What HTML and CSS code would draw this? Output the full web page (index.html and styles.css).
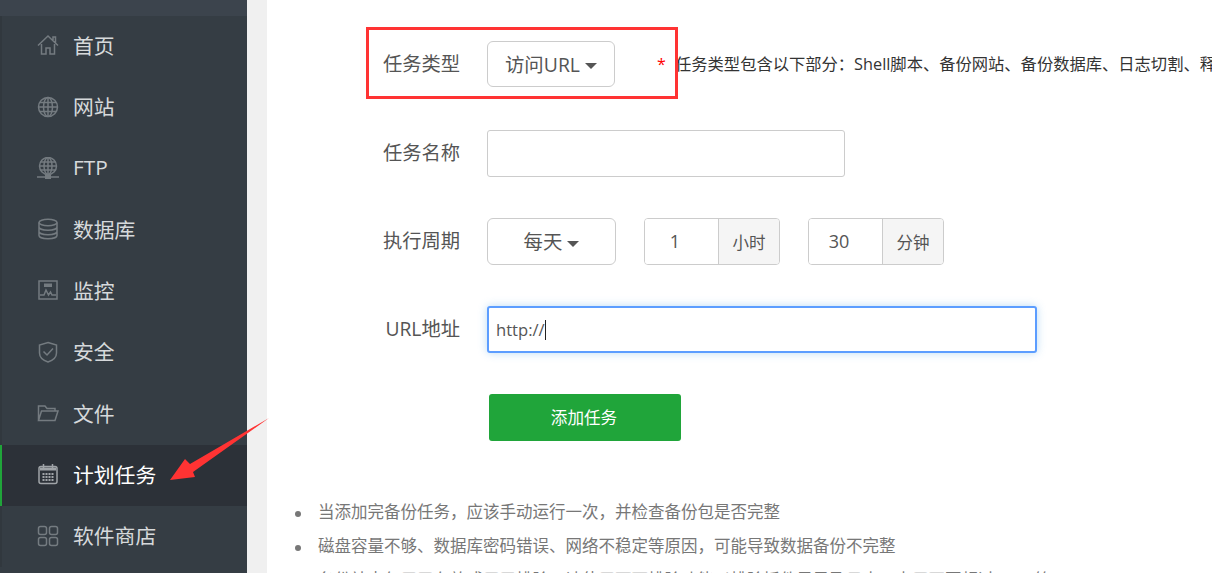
FILE: index.html
```html
<!DOCTYPE html>
<html lang="zh-CN">
<head>
<meta charset="utf-8">
<title>计划任务</title>
<link rel="stylesheet" href="styles.css">
</head>
<body>
<aside class="sidebar">
  <div class="sidebar-top"></div>
  <nav class="menu">
    <a class="menu-item"><svg class="icon" viewBox="0 0 22 22"><path d="M1 11.500 11 2l10 9.500M16 6V3h2.500v5.500M4.500 10v10H9v-6h4v6h4.500V10"/></svg><span>首页</span></a>
    <a class="menu-item"><svg class="icon" viewBox="0 0 22 22"><circle cx="11" cy="11" r="9.500"/><ellipse cx="11" cy="11" rx="4.500" ry="9.500"/><path d="M11 1.500v19M1.500 11h19M2.800 6.500h16.400M2.800 15.500h16.400"/></svg><span>网站</span></a>
    <a class="menu-item"><svg class="icon" viewBox="0 0 22 22"><circle cx="11" cy="9" r="8.500"/><ellipse cx="11" cy="9" rx="4" ry="8.500"/><path d="M11 .5v17M2.500 9h17M3.500 5h15M3.500 13h15M0 20h22"/><rect class="solid" x="8" y="18" width="6" height="4"/></svg><span>FTP</span></a>
    <a class="menu-item"><svg class="icon" viewBox="0 0 22 22"><ellipse cx="11" cy="4.500" rx="9" ry="3.200"/><path d="M2 4.500v13c0 1.800 4 3.200 9 3.200s9-1.400 9-3.200v-13M2 9c0 1.800 4 3.200 9 3.200S20 10.800 20 9M2 13.500c0 1.800 4 3.200 9 3.200s9-1.400 9-3.200"/></svg><span>数据库</span></a>
    <a class="menu-item"><svg class="icon" viewBox="0 0 22 22"><rect x="2" y="2" width="18" height="18"/><rect class="solid" x="7" y="4.500" width="8" height="3.500"/><path d="M3 16h4l2-5 2.500 5 2-3 1.500 3h4"/></svg><span>监控</span></a>
    <a class="menu-item"><svg class="icon" viewBox="0 0 22 22"><path d="M11 1.500 19.500 4v8c0 4.500-4 7.500-8.500 9-4.500-1.500-8.500-4.500-8.500-9V4Z"/><path d="m6.500 10.500 3.500 3.500 6-6.500"/></svg><span>安全</span></a>
    <a class="menu-item"><svg class="icon" viewBox="0 0 22 22"><path d="M1.500 18.500V4h6.500l2 2.500h8V9M1.500 18.500h16.500L21 9H4.500Z"/></svg><span>文件</span></a>
    <a class="menu-item is-active"><svg class="icon" viewBox="0 0 22 22"><rect x="2" y="3.500" width="18" height="17" rx="2"/><path d="M6.500 1v4M15.500 1v4"/><rect class="solid" x="3" y="4.500" width="16" height="3"/><path class="dots" d="M5.500 11h11M5.500 14h11M5.500 17h11"/></svg><span>计划任务</span></a>
    <a class="menu-item"><svg class="icon" viewBox="0 0 22 22"><rect x="1.500" y="1.500" width="8" height="8" rx="2"/><rect x="12.500" y="1.500" width="8" height="8" rx="2"/><rect x="1.500" y="12.500" width="8" height="8" rx="2"/><rect x="12.500" y="12.500" width="8" height="8" rx="2"/></svg><span>软件商店</span></a>
  </nav>
</aside>
<div class="gutter"></div>
<main class="content">
  <form class="task-form">
    <div class="row row-type">
      <label class="row-label">任务类型</label>
      <button type="button" class="select select-type">访问URL<i class="caret"></i></button>
      <span class="star">*</span>
      <span class="hint">任务类型包含以下部分：Shell脚本、备份网站、备份数据库、日志切割、释放内存、访问URL</span>
    </div>
    <div class="row">
      <label class="row-label">任务名称</label>
      <input class="text-input name-input" type="text">
    </div>
    <div class="row">
      <label class="row-label">执行周期</label>
      <button type="button" class="select select-cycle">每天<i class="caret"></i></button>
      <div class="group group-hour">
        <input class="group-input" type="text" value="1">
        <span class="group-addon">小时</span>
      </div>
      <div class="group group-minute">
        <input class="group-input" type="text" value="30">
        <span class="group-addon">分钟</span>
      </div>
    </div>
    <div class="row">
      <label class="row-label">URL地址</label>
      <div class="text-input url-input">http://<span class="text-caret"></span></div>
    </div>
    <div class="row row-submit">
      <button type="button" class="submit">添加任务</button>
    </div>
  </form>
  <ul class="notes">
    <li>当添加完备份任务，应该手动运行一次，并检查备份包是否完整</li>
    <li>磁盘容量不够、数据库密码错误、网络不稳定等原因，可能导致数据备份不完整</li>
    <li>备份站点仅用于存放或用于排除，请使用下面排除功能以排除插件目录及日志，占用不要超过300G等</li>
  </ul>
</main>
<div class="mark-box"></div>
<svg class="mark-arrow" viewBox="0 0 110 70"><polygon points="109,1 30,47 25,42 10,63 35,60 33,55"/></svg>
</body>
</html>
```
FILE: styles.css
```css
* { box-sizing: border-box; }
html, body { height: 100%; }
body {
  margin: 0;
  display: flex;
  height: 573px;
  overflow: hidden;
  background: #fff;
  font-family: "Open Sans", "Noto Sans CJK SC", sans-serif;
  color: #555;
}
.sidebar {
  flex: 0 0 247px;
  background: #353d44;
  display: flex;
  flex-direction: column;
}
.sidebar-top {
  flex: 0 0 15.600px;
  background: #3c444d;
}
.menu { display: flex; flex-direction: column; }
.menu-item {
  display: flex;
  align-items: center;
  flex: 0 0 auto;
  height: 61.300px;
  padding-left: 35px;
  border-left: 2px solid #31383e;
  font-size: 20.800px;
  color: #d6d9db;
}
.menu-item span { margin-left: 14px; padding-bottom: 3px; }
.menu-item.is-active {
  background: #2c3138;
  border-left-color: #20a53a;
  color: #fff;
}
.icon {
  width: 22px;
  height: 22px;
  margin-bottom: 2px;
  fill: none;
  stroke: #747b80;
  stroke-width: 1.500;
  flex: none;
}
.icon .solid { fill: #747b80; stroke: none; }
.is-active .icon { stroke: #a0a4a8; }
.is-active .icon .solid { fill: #a0a4a8; }
.icon .dots { stroke-dasharray: 2 1; stroke-width: 2; }
.gutter {
  flex: 0 0 20px;
  background: #f0f0f0;
}
.content {
  flex: 1;
  min-width: 0;
  overflow: hidden;
  padding-top: 41px;
}
.task-form { display: flex; flex-direction: column; gap: 41px; }
.row {
  display: flex;
  align-items: center;
  height: 47px;
  white-space: nowrap;
}
.row-type { height: 46px; margin-bottom: 2px; }
.row-label {
  flex: 0 0 193px;
  text-align: right;
  font-size: 19.300px;
  color: #555;
  margin-right: 27px;
  padding-bottom: 3px;
}
.select {
  flex: none;
  height: 100%;
  background: #fff;
  border: 1px solid #ccc;
  border-radius: 6px;
  font: inherit;
  font-size: 19.400px;
  color: #555;
  padding: 0 0 2px;
}
.select-type { width: 128px; }
.select-cycle { width: 129px; }
.caret {
  display: inline-block;
  margin-left: 5px;
  vertical-align: middle;
  border-top: 6px solid #555;
  border-left: 6px solid transparent;
  border-right: 6px solid transparent;
}
.star {
  margin-left: 42px;
  color: #f00;
  font-size: 16px;
  width: 18px;
  flex: none;
}
.hint {
  font-size: 16.300px;
  color: #333;
  padding-bottom: 2px;
}
.text-input {
  flex: none;
  height: 100%;
  border: 1px solid #ccc;
  border-radius: 3px;
  background: #fff;
  font: inherit;
  font-size: 16.600px;
  color: #555;
}
.name-input { width: 358px; }
.url-input {
  width: 550px;
  display: flex;
  align-items: center;
  padding-left: 7px;
  border: 2px solid #5c9dff;
  box-shadow: 0 0 9px rgba(102, 175, 233, .45);
}
.text-caret {
  width: 1px;
  height: 20px;
  background: #222;
}
.group {
  flex: none;
  display: flex;
  width: 136px;
  height: 100%;
  border: 1px solid #ccc;
  border-radius: 4px;
  overflow: hidden;
}
.group-hour { margin-left: 28px; }
.group-minute { margin-left: 28px; }
.group-input {
  width: 73px;
  border: 0;
  padding: 0 13px 2px 0;
  text-align: center;
  background: #fff;
  font: inherit;
  font-size: 18px;
  color: #555;
}
.group-addon {
  flex: 1;
  display: flex;
  align-items: center;
  justify-content: center;
  background: #f5f5f5;
  border-left: 1px solid #ccc;
  font-size: 16.500px;
  color: #555;
}
.row-submit { padding-left: 222px; }
.submit {
  width: 192px;
  height: 100%;
  background: #20a53a;
  border: 0;
  border-radius: 3px;
  color: #fff;
  font: inherit;
  font-size: 16.600px;
  padding: 0 2px 2px 0;
}
.notes {
  margin: 54px 0 0;
  padding: 0 0 0 51px;
  list-style: none;
  font-size: 16.500px;
  line-height: 34px;
  color: #777;
  white-space: nowrap;
}
.notes li::before {
  content: "";
  display: inline-block;
  width: 6px;
  height: 6px;
  margin-left: -23px;
  margin-right: 17px;
  border-radius: 50%;
  background: #777;
  vertical-align: middle;
}
.mark-box {
  position: absolute;
  left: 366px;
  top: 27px;
  width: 312px;
  height: 72px;
  border: 3px solid #f33;
  pointer-events: none;
}
.mark-arrow {
  position: absolute;
  left: 160px;
  top: 417px;
  width: 110px;
  height: 70px;
  fill: #f33;
}
```
